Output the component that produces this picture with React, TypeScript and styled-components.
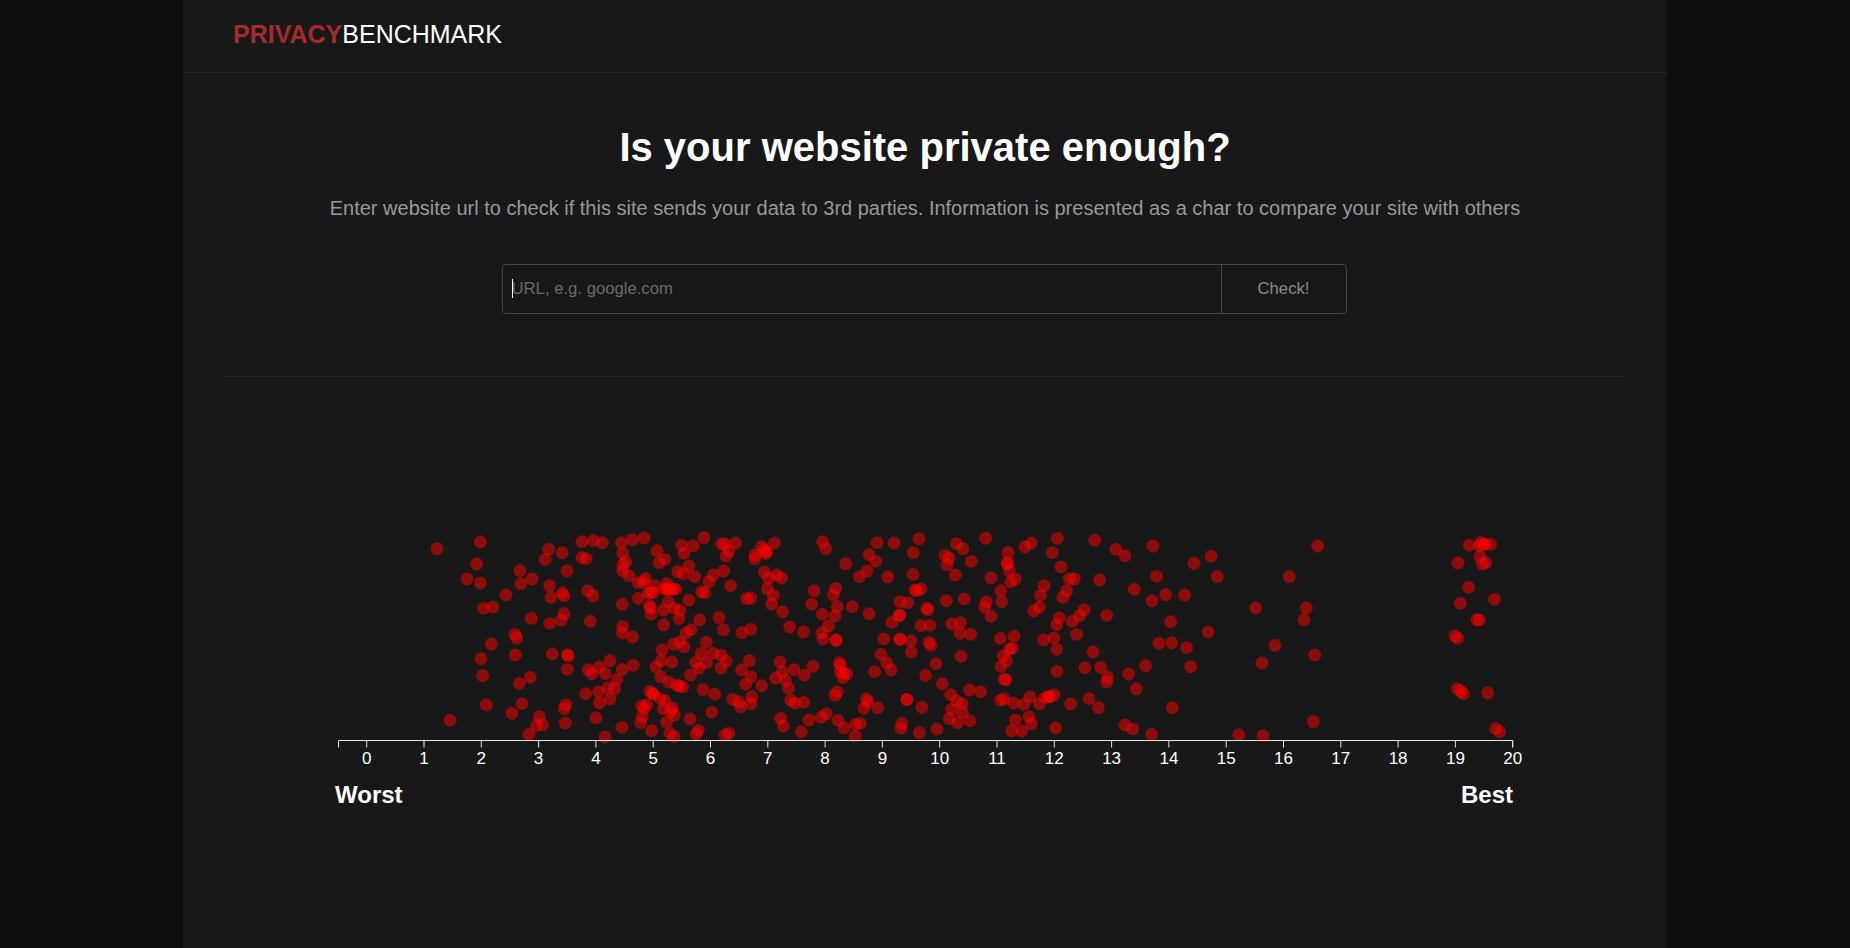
import React from "react";
import styled, { createGlobalStyle } from "styled-components";

const GlobalStyle = createGlobalStyle`
  html, body { margin: 0; padding: 0; background: #0f0f0f; }
  body { font-family: "Liberation Sans", Arial, sans-serif; overflow: hidden; }
`;

const Shell = styled.div`
  box-sizing: border-box;
  width: 1484px;
  min-height: 948px;
  margin-left: 183px;
  background: #181818;
`;

const Header = styled.header`
  box-sizing: border-box;
  height: 73px;
  padding: 0 50px;
  display: flex;
  align-items: center;
  border-bottom: 1px solid #242424;
`;

const Brand = styled.a`
  font-size: 25px;
  line-height: 28px;
  margin-top: -5px;
  color: #fff;
`;

const BrandAccent = styled.b`
  color: #a52a2a;
`;

const Main = styled.main`
  padding: 0 39px 0 37px;
  display: flex;
  flex-direction: column;
  align-items: center;
`;

const Title = styled.h1`
  margin: 50px 0 0 2px;
  font-size: 40px;
  line-height: 48px;
  font-weight: 700;
  color: #fff;
`;

const Subtitle = styled.p`
  margin: 24px 0 0 2px;
  font-size: 20px;
  line-height: 27px;
  color: #999;
`;

const Form = styled.form`
  box-sizing: border-box;
  position: relative;
  width: 845px;
  height: 50px;
  margin-top: 42px;
  display: flex;
  border: 1px solid #444;
  border-radius: 4px;
`;

const UrlInput = styled.input`
  flex: 1;
  min-width: 0;
  padding: 0 9px;
  border: 0;
  outline: 0;
  background: transparent;
  font: 16.7px "Liberation Sans", Arial, sans-serif;
  color: #fff;
  &::placeholder { color: #6a6a6a; opacity: 1; }
`;

const Caret = styled.span`
  position: absolute;
  left: 9px;
  top: 14px;
  width: 1px;
  height: 19px;
  background: #fff;
`;

const CheckButton = styled.button`
  width: 125px;
  padding: 0;
  border: 0;
  border-left: 1px solid #444;
  background: transparent;
  font: 16.7px "Liberation Sans", Arial, sans-serif;
  color: #8a8a8a;
`;

const Divider = styled.hr`
  width: 100%;
  height: 1px;
  margin: 62px 0 0;
  border: 0;
  background: #242424;
`;

const Chart = styled.section`
  width: 1178px;
  margin-top: 143px;
`;

const Plot = styled.svg`
  display: block;
  width: 1178px;
  height: 250px;
  overflow: visible;
`;

const Dot = styled.circle`
  fill: rgba(255, 0, 0, 0.5);
`;

const AxisLine = styled.path`
  fill: none;
  stroke: #e4e4e4;
  stroke-width: 1;
`;

const TickLabel = styled.text`
  fill: #fff;
  font-size: 17px;
  text-anchor: middle;
`;

const Ends = styled.div`
  display: flex;
  justify-content: space-between;
  margin-top: 9px;
  font-size: 24px;
  line-height: 32px;
  font-weight: 700;
  color: #fff;
`;

type P = [number, number];
const left: P[] = [[351,86],[481,66],[470,132],[441,177],[481,189],[600,152],[636,177],[603,191],[558,225],[491,265],[519,261],[634,295],[689,197],[686,88],[676,118],[727,98],[741,153],[786,65],[820,62],[847,68],[786,113],[799,116],[904,68],[937,59],[972,54],[908,100],[917,125],[908,135],[908,152],[927,167],[955,188],[970,187],[977,176],[1011,92],[1035,118],[1017,128],[1085,76],[1120,77],[1092,100],[1152,53],[1107,138],[1073,155],[1090,161],[1124,170],[1180,165],[1167,185],[1005,197],[1040,191],[1034,208],[1045,210],[1067,208],[1040,205],[1052,208],[1060,207],[985,220],[1000,218],[993,216],[955,235],[1045,245],[1107,240],[1145,216],[1155,218],[988,257],[992,264],[1030,271],[1062,265],[1080,271],[993,283],[1077,296],[1139,300],[1031,315],[1113,330],[1098,339],[693,232],[727,219],[732,227],[803,212],[819,227],[907,253],[732,281],[724,301],[689,310],[811,304],[908,319],[907,339],[938,351],[585,343],[590,354],[514,372],[586,405],[483,416],[488,467],[697,402],[742,404],[745,408],[742,448],[631,472],[598,490],[499,555],[606,551],[576,580],[390,601],[737,554],[733,566],[736,609],[658,590],[650,617],[668,614],[627,643],[855,651],[906,622],[828,593],[838,549],[870,537],[836,515],[797,521],[864,503],[884,506],[891,478],[856,461],[816,461],[805,449],[838,441],[870,422],[907,448],[940,436],[1008,440],[1024,422],[1026,390],[1060,373],[1080,365],[1092,380],[1056,426],[1022,470],[1046,486],[1070,496],[1077,498],[1088,501],[1112,465],[1137,445],[1127,427],[1160,428],[1144,400],[1159,367],[1180,400],[1149,509],[1184,522],[990,514],[998,521],[1000,522],[1020,535],[1035,542],[1057,564],[1030,566],[1052,574],[1063,585],[1040,606],[1110,597],[1175,577],[965,558],[980,555],[972,565],[967,590],[962,608],[995,632],[1050,640],[1062,650],[1135,631],[1129,642]];
const middle: P[] = [[5,72],[15,72],[47,69],[27,93],[18,108],[11,153],[32,197],[125,80],[163,69],[105,105],[105,116],[133,90],[140,95],[138,100],[308,65],[317,86],[377,131],[471,68],[522,69],[597,57],[580,98],[447,104],[467,124],[441,153],[418,170],[503,171],[579,163],[709,71],[729,86],[797,55],[934,69],[915,81],[1012,55],[1124,61],[1188,88],[997,98],[1023,141],[864,98],[675,106],[687,114],[681,135],[754,124],[706,165],[813,174],[863,128],[861,132],[868,152],[872,185],[886,178],[1048,176],[1063,177],[1139,180],[972,197],[962,226],[1040,212],[1029,232],[843,212],[845,245],[799,246],[794,261],[813,289],[958,261],[941,273],[1092,269],[1079,287],[1057,304],[1160,286],[1018,294],[1010,314],[1070,343],[1002,354],[971,359],[1010,388],[882,349],[841,355],[877,385],[869,387],[850,407],[860,422],[843,440],[1119,396],[1095,443],[1142,442],[1162,470],[1160,486],[1011,454],[853,478],[858,479],[1002,524],[985,530],[990,530],[975,533],[958,551],[930,531],[912,553],[881,549],[842,541],[852,536],[1052,552],[1107,536],[1135,563],[927,590],[934,611],[886,600],[875,632],[905,633],[1007,624],[133,156],[146,175],[170,165],[185,174],[142,206],[160,226],[155,252],[188,275],[80,236],[92,234],[282,212],[347,205],[340,225],[275,252],[352,260],[397,260],[307,283],[345,288],[447,281],[209,321],[250,336],[93,328],[66,338],[10,329],[-3,293],[325,318],[306,338],[309,357],[347,360],[349,361],[491,357],[540,245],[563,248],[585,210],[590,212],[603,207],[679,242],[733,237],[620,265],[624,269],[540,285],[537,287],[516,307],[603,317],[630,316],[695,312],[722,308],[720,340],[752,343],[539,357],[541,358],[573,363],[574,396],[627,367],[633,376],[483,403],[500,428],[513,450],[464,455],[648,431],[723,409],[617,466],[667,491],[180,426],[187,455],[222,449],[279,439],[253,465],[167,474],[196,481],[206,505],[125,497],[77,493],[93,470],[65,450],[88,422],[19,423],[3,405],[3,444],[358,428],[362,436],[361,455],[380,461],[370,460],[369,473],[352,516],[345,526],[692,524],[748,510],[782,515],[710,543],[727,551],[695,568],[727,578],[688,596],[713,608],[750,602],[606,562],[560,538],[561,539],[473,563],[439,537],[443,545],[432,565],[212,541],[225,549],[251,547],[95,530],[93,551],[57,545],[62,560],[38,538],[182,595],[190,618],[267,600],[303,592],[319,581],[354,601],[372,623],[407,613],[421,610],[405,648],[244,635],[545,610],[543,625],[598,638],[651,627],[15,645],[27,640]];
const right: P[] = [[99,78],[15,107],[222,130],[273,109],[110,169],[292,170],[508,170],[593,78],[43,208],[137,224],[194,225],[96,243],[407,264],[559,264],[552,299],[152,305],[264,336],[117,370],[155,368],[200,383],[465,376],[584,405],[426,429],[77,437],[212,440],[26,462],[49,507],[157,563],[580,605],[15,615],[38,627],[95,643],[356,644],[429,647],[1048,76],[1083,67],[1078,78],[1090,74],[1095,72],[1112,73],[1080,110],[1087,132],[1097,128],[1014,129],[1046,202],[1021,250],[1123,238],[1071,299],[1078,300],[1005,348],[1013,355],[1012,507],[1022,513],[1030,521],[1103,519],[1127,626],[1139,635]];

const CHART_X = 335;
const place = (pts: P[], ox: number): P[] =>
  pts.map(([x, y]) => [ox + x / 3 - CHART_X, y / 3]);
const dots: P[] = [...place(left, 320), ...place(middle, 720), ...place(right, 1120)];

const BASE = 220.5;
const X0 = 366.7 - CHART_X;
const STEP = 57.3;
const ticks = Array.from({ length: 21 }, (_, i) => i);
const domainStart = 338.5 - CHART_X;
const domainEnd = X0 + STEP * 20;

export default function App() {
  return (
    <>
      <GlobalStyle />
      <Shell>
        <Header>
          <Brand>
            <BrandAccent>PRIVACY</BrandAccent>BENCHMARK
          </Brand>
        </Header>
        <Main>
          <Title>Is your website private enough?</Title>
          <Subtitle>
            Enter website url to check if this site sends your data to 3rd parties. Information is presented as a char to compare your site with others
          </Subtitle>
          <Form onSubmit={(e) => e.preventDefault()}>
            <UrlInput placeholder="URL, e.g. google.com" />
            <Caret />
            <CheckButton type="submit">Check!</CheckButton>
          </Form>
          <Divider />
          <Chart>
            <Plot viewBox="0 0 1178 250">
              {dots.map(([x, y], i) => (
                <Dot key={i} cx={x} cy={y} r={6.4} />
              ))}
              <AxisLine d={`M${domainStart},${BASE + 7}V${BASE}H${domainEnd}V${BASE + 7}`} />
              {ticks.map((t) => (
                <g key={t} transform={`translate(${X0 + STEP * t},${BASE})`}>
                  <AxisLine d="M0,0V7" />
                  <TickLabel y={23.5}>{t}</TickLabel>
                </g>
              ))}
            </Plot>
            <Ends>
              <span>Worst</span>
              <span>Best</span>
            </Ends>
          </Chart>
        </Main>
      </Shell>
    </>
  );
}
